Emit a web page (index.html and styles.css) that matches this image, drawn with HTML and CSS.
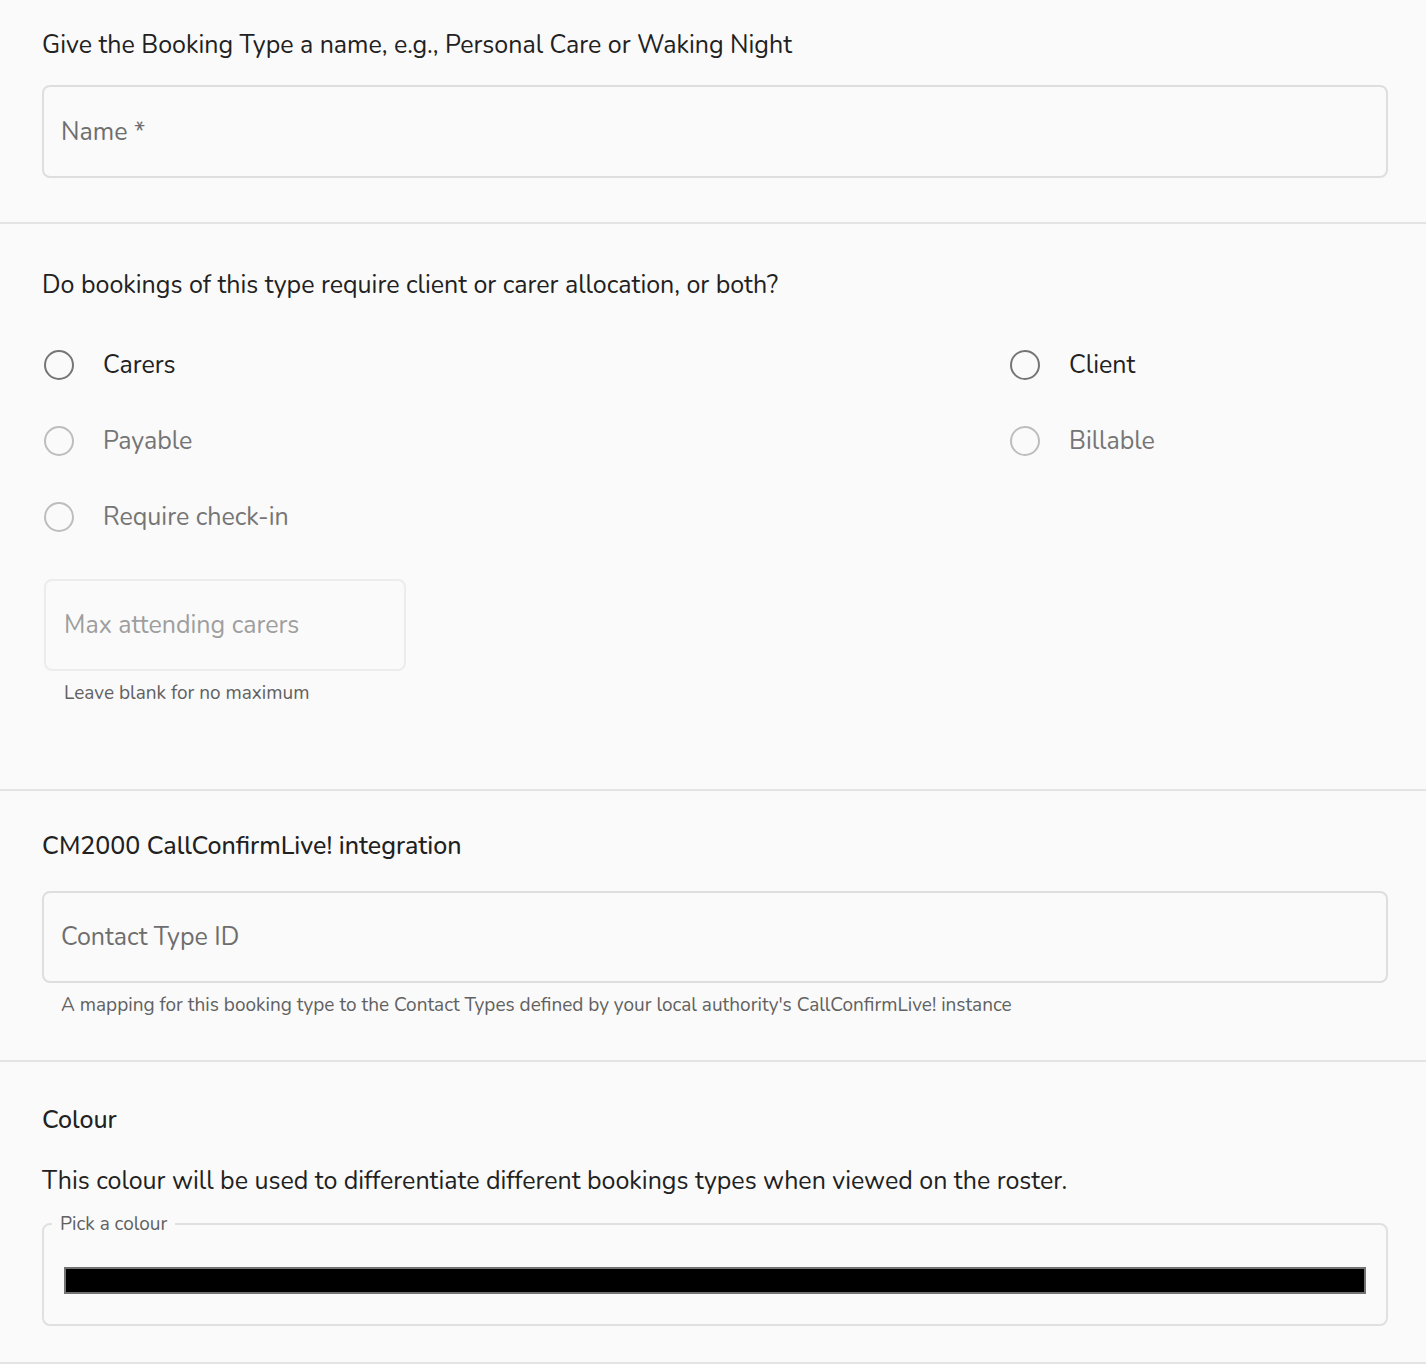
FILE: index.html
```html
<!DOCTYPE html>
<html lang="en">
<head>
    <meta charset="UTF-8">
    <meta name="viewport" content="width=device-width, initial-scale=1.0">
    <title>Booking Type</title>
    <link rel="stylesheet" href="styles.css">
</head>
<body>
    <form class="booking-form">
        <section class="section section-name">
            <p class="prompt">Give the Booking Type a name, e.g., Personal Care or Waking Night</p>
            <div class="field">
                <input type="text" class="text-input" placeholder="Name *">
            </div>
        </section>

        <section class="section section-allocation">
            <p class="prompt">Do bookings of this type require client or carer allocation, or both?</p>

            <div class="options">
                <label class="option">
                    <span class="radio"></span>
                    <span class="option-label">Carers</span>
                </label>
                <label class="option">
                    <span class="radio"></span>
                    <span class="option-label">Client</span>
                </label>
                <label class="option disabled">
                    <span class="radio"></span>
                    <span class="option-label">Payable</span>
                </label>
                <label class="option disabled">
                    <span class="radio"></span>
                    <span class="option-label">Billable</span>
                </label>
                <label class="option disabled">
                    <span class="radio"></span>
                    <span class="option-label">Require check-in</span>
                </label>
            </div>

            <div class="field field-small">
                <input type="text" class="text-input faded" placeholder="Max attending carers">
                <div class="helper">Leave blank for no maximum</div>
            </div>
        </section>

        <section class="section section-cm">
            <h3 class="heading">CM2000 CallConfirmLive! integration</h3>
            <div class="field">
                <input type="text" class="text-input" placeholder="Contact Type ID">
                <div class="helper helper-wide">A mapping for this booking type to the Contact Types defined by your local authority's CallConfirmLive! instance</div>
            </div>
        </section>

        <section class="section section-colour">
            <h3 class="heading">Colour</h3>
            <p class="prompt prompt-colour">This colour will be used to differentiate different bookings types when viewed on the roster.</p>
            <fieldset class="colour-picker">
                <legend>Pick a colour</legend>
                <div class="swatch"></div>
            </fieldset>
        </section>
    </form>
</body>
</html>
```

FILE: styles.css
```css
* {
    margin: 0;
    padding: 0;
    box-sizing: border-box;
}

body {
    font-family: "Nunito", "Open Sans", "Noto Sans", sans-serif;
    background: #fafafa;
    color: #212121;
}

.section {
    padding: 0 38px 0 42px;
    border-bottom: 2px solid #e4e4e4;
}

.prompt,
.heading {
    font-size: 25px;
    line-height: 32px;
    font-weight: 400;
    color: #212121;
}

.heading {
    font-weight: 500;
}

/* name */
.section-name {
    padding-top: 29px;
    padding-bottom: 44px;
}

.section-name .field {
    margin-top: 24px;
}

.text-input {
    display: block;
    width: 100%;
    height: 93px;
    padding: 0 17px;
    font-family: inherit;
    font-size: 25px;
    color: #212121;
    background: transparent;
    border: 2px solid #dedede;
    border-radius: 8px;
    outline: none;
}

.text-input::placeholder {
    color: #6e6e6e;
}

.text-input.faded {
    padding: 0 18px;
    border-color: #ececec;
}

.text-input.faded::placeholder {
    color: #9e9e9e;
}

.helper {
    margin-top: 11px;
    padding-left: 20px;
    font-size: 19px;
    line-height: 22px;
    color: #616161;
}

.helper-wide {
    padding-left: 19px;
}

/* allocation */
.section-allocation {
    padding-top: 45px;
    padding-bottom: 85px;
}

.options {
    display: grid;
    grid-template-columns: 966px 1fr;
    row-gap: 28px;
    margin-top: 40px;
    padding-left: 2px;
}

.option {
    display: flex;
    align-items: center;
    gap: 29px;
    height: 48px;
}

.radio {
    width: 30px;
    height: 30px;
    border: 2px solid #757575;
    border-radius: 50%;
    flex-shrink: 0;
}

.option-label {
    font-size: 25px;
    color: #212121;
}

.option.disabled .radio {
    border-color: #bdbdbd;
}

.option.disabled .option-label {
    color: #757575;
}

.field-small {
    width: 362px;
    margin-top: 38px;
    margin-left: 2px;
}

.field-small .text-input {
    height: 92px;
}

/* cm2000 */
.section-cm {
    padding-top: 39px;
    padding-bottom: 44px;
}

.section-cm .field {
    margin-top: 29px;
}

.section-cm .text-input {
    height: 92px;
}

/* colour */
.section-colour {
    padding-top: 42px;
    padding-bottom: 36px;
}

.prompt-colour {
    margin-top: 29px;
}

.colour-picker {
    margin-top: 16px;
    padding: 0 20px 30px;
    border: 2px solid #e0e0e0;
    border-radius: 8px;
}

.colour-picker legend {
    margin-left: -12px;
    padding: 0 8px;
    font-size: 19px;
    line-height: 22px;
    color: #616161;
}

.swatch {
    margin-top: 32px;
    height: 27px;
    background: #000;
    border: 2px solid #737373;
}
```
